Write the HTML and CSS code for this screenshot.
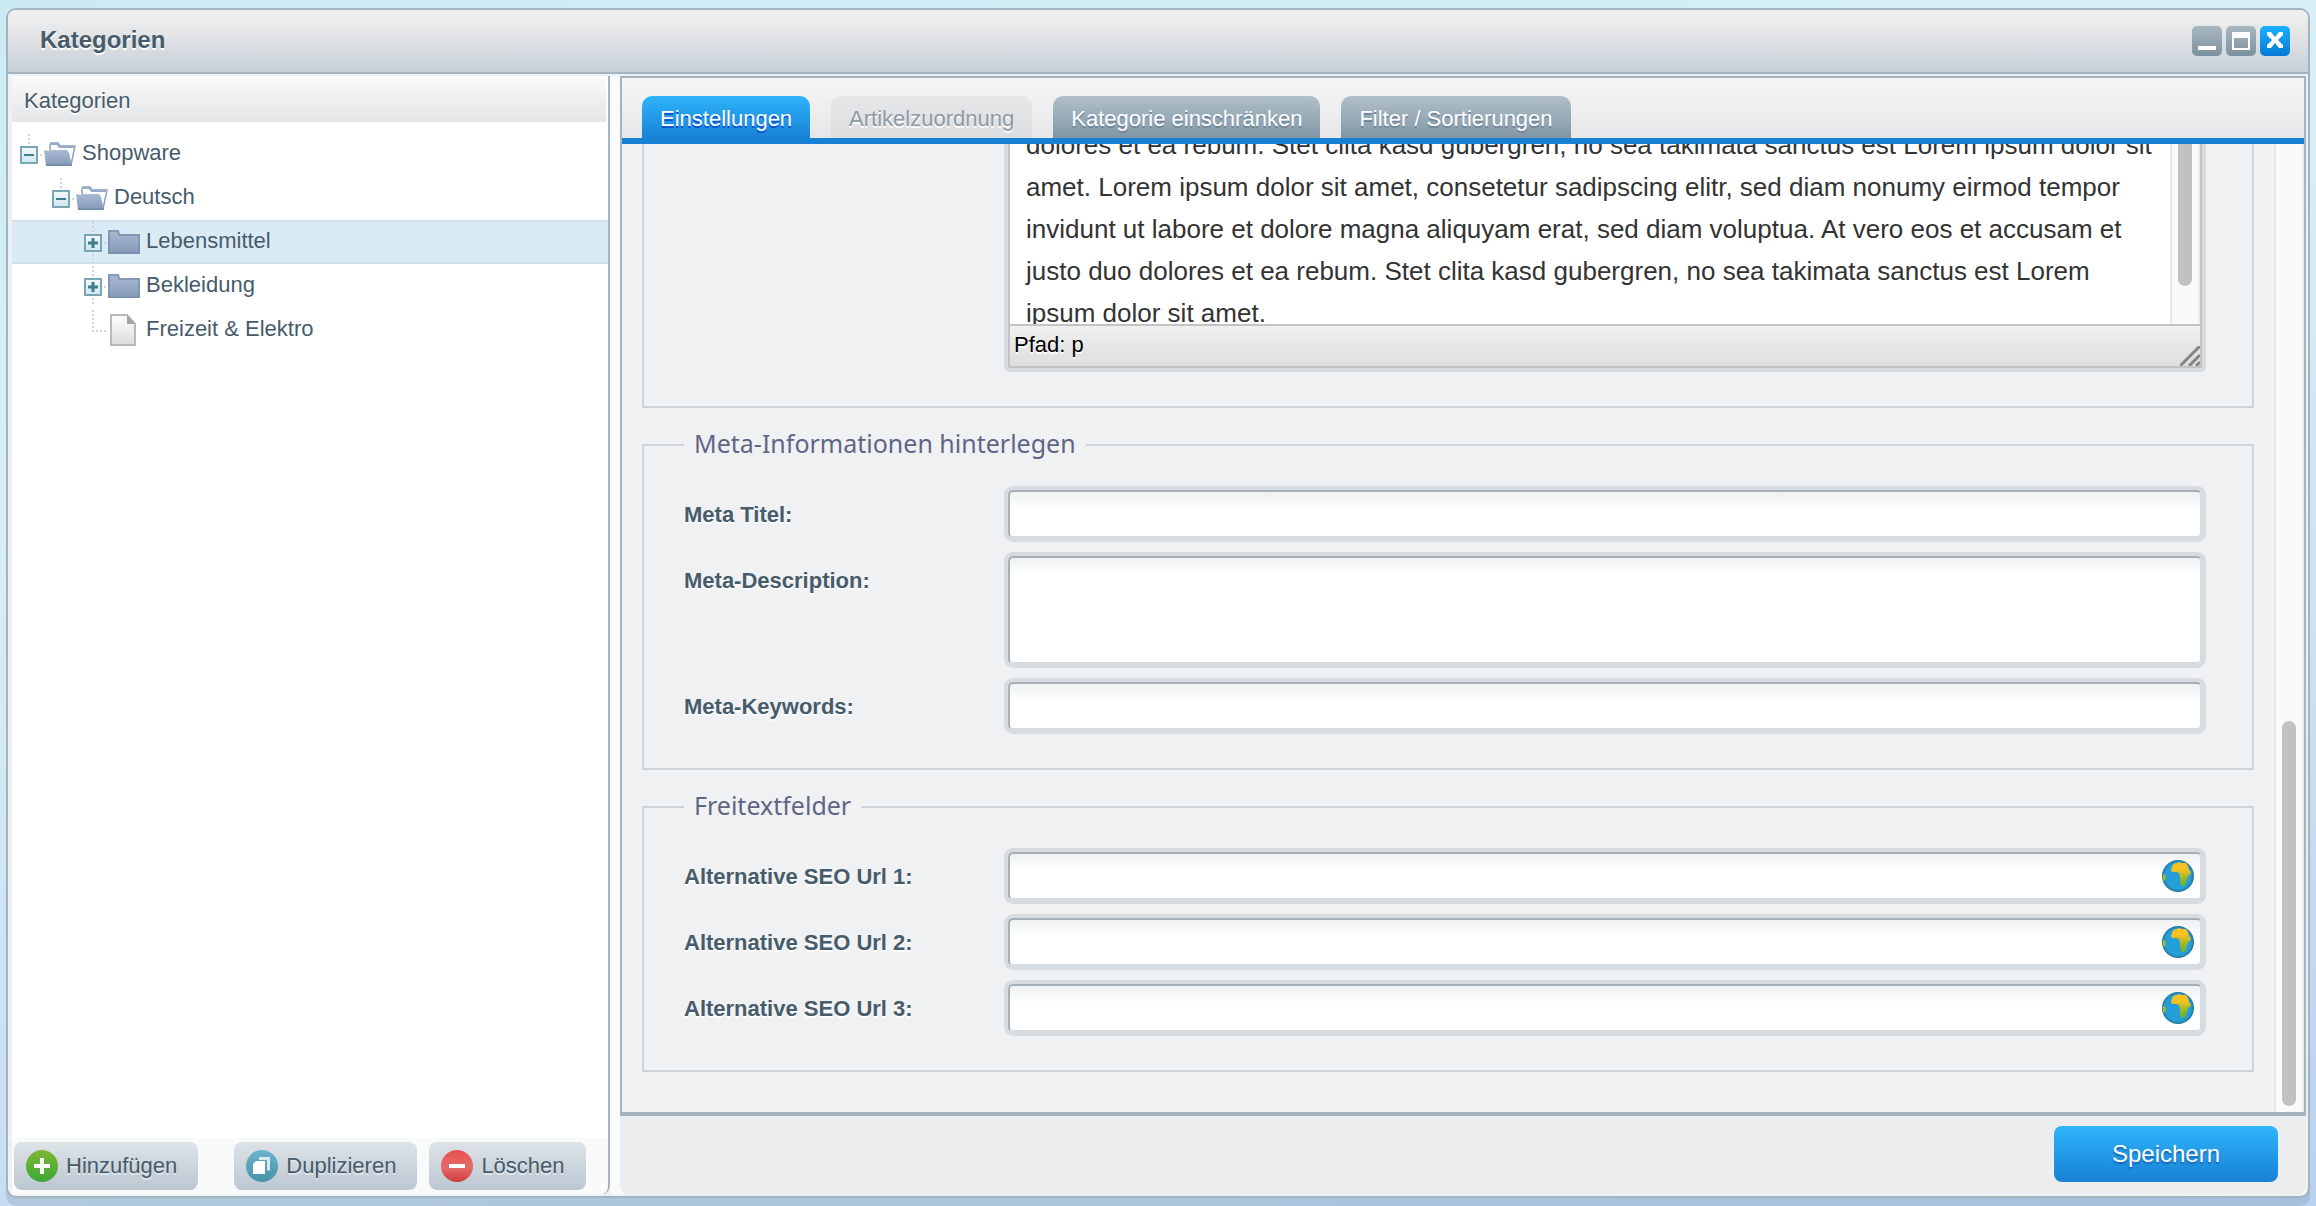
FILE: index.html
```html
<!DOCTYPE html>
<html lang="de">
<head>
<meta charset="utf-8">
<title>Kategorien</title>
<link rel="stylesheet" href="styles.css">
</head>
<body>
<svg class="defs" aria-hidden="true">
  <defs>
    <linearGradient id="g-folder" x1="0" y1="0" x2="0" y2="1"><stop offset="0" stop-color="#a9bad2"/><stop offset="1" stop-color="#859ab8"/></linearGradient>
    <linearGradient id="g-exp" x1="0" y1="0" x2="0" y2="1"><stop offset="0" stop-color="#f2fafb"/><stop offset="1" stop-color="#cfe6ee"/></linearGradient>
    <linearGradient id="g-page" x1="0" y1="0" x2="0" y2="1"><stop offset="0" stop-color="#fdfdfd"/><stop offset="1" stop-color="#dcdcdc"/></linearGradient>
    <linearGradient id="g-green" x1="0" y1="0" x2="0" y2="1"><stop offset="0" stop-color="#7fb734"/><stop offset="1" stop-color="#3aa838"/></linearGradient>
    <linearGradient id="g-teal" x1="0" y1="0" x2="0" y2="1"><stop offset="0" stop-color="#6db3cc"/><stop offset="1" stop-color="#4494a8"/></linearGradient>
    <linearGradient id="g-red" x1="0" y1="0" x2="0" y2="1"><stop offset="0" stop-color="#e84f50"/><stop offset=".55" stop-color="#e76a6a"/><stop offset="1" stop-color="#cf3b3a"/></linearGradient>
    <linearGradient id="g-land" gradientUnits="userSpaceOnUse" x1="0" y1="9" x2="0" y2="22"><stop offset="0" stop-color="#f6c121"/><stop offset="1" stop-color="#7ab32b"/></linearGradient>
    <radialGradient id="g-sea"><stop offset=".8" stop-color="#259fd9"/><stop offset="1" stop-color="#22749b"/></radialGradient>
  </defs>
  <symbol id="i-minus" viewBox="0 0 18 18"><rect x="1" y="1" width="16" height="16" fill="url(#g-exp)" stroke="#7aa6b4" stroke-width="2"/><path d="M4 9h10" stroke="#3f7d8f" stroke-width="2"/></symbol>
  <symbol id="i-plus" viewBox="0 0 18 18"><rect x="1" y="1" width="16" height="16" fill="url(#g-exp)" stroke="#7aa6b4" stroke-width="2"/><path d="M4 9h10M9 4v10" stroke="#3f7d8f" stroke-width="3"/></symbol>
  <symbol id="i-folder" viewBox="0 0 32 24"><path d="M0 0h11l1 4h20v20H0z" fill="url(#g-folder)"/><path d="M1 23V1h9l1 4h20v18z" fill="none" stroke="#7890ae" stroke-width="1.5"/></symbol>
  <symbol id="i-open" viewBox="0 0 32 24"><path d="M6 8V3l1-2h7l2 3h15l-4 19h-4z" fill="#fdfdff" stroke="#8da0bc" stroke-width="1.5"/><path d="M6 1h8l2 3h15v2H15l-2-3H6z" fill="#97abc6"/><path d="M0 8l6 1 3-1h14l2 3 3 13H2z" fill="url(#g-folder)"/><path d="M2 23h26" stroke="#7088a8" stroke-width="1.5"/></symbol>
  <symbol id="i-page" viewBox="0 0 26 32"><path d="M1 1h16l8 9v21H1z" fill="url(#g-page)" stroke="#b9b9b9" stroke-width="2"/><path d="M17 1v9h8z" fill="#a3a3a3"/></symbol>
  <symbol id="i-globe" viewBox="0 0 32 32"><circle cx="16" cy="16" r="16" fill="url(#g-sea)"/><path d="M10 7q1-4 5-4l2-1 3 1 4 0 2 3 1 4 2 2-1 3-2 1-1 4-2 5q-2 2-4 0l-1-3 0-5-1-4-3-1-4 0-1-2zM1 14l2 1 1 3-1 2-2 1z" fill="url(#g-land)"/></symbol>
</svg>

<div class="window">
  <header class="titlebar">
    <h1>Kategorien</h1>
    <div class="tools">
      <button type="button" class="tool" aria-label="Minimieren"><svg viewBox="0 0 30 30"><path d="M6 20h18v4H6z" fill="#fff"/></svg></button>
      <button type="button" class="tool" aria-label="Maximieren"><svg viewBox="0 0 30 30"><path d="M6 6h18v18H6z M8 12v10h14v-10z" fill="#fff" fill-rule="evenodd"/></svg></button>
      <button type="button" class="tool tool-close" aria-label="Schließen"><svg viewBox="0 0 30 30"><path d="M7 6h4l4 5 4-5h4v3l-5 5 5 5v3h-4l-4-5-4 5H7v-3l5-5-5-5z" fill="#fff"/></svg></button>
    </div>
  </header>

  <div class="content">
    <aside class="sidebar">
      <h2>Kategorien</h2>
      <ul class="tree">
        <li class="node level-0"><span class="elbow top"><svg class="exp"><use href="#i-minus"/></svg></span><svg class="folder"><use href="#i-open"/></svg><span>Shopware</span></li>
        <li class="node level-1"><span class="elbow top"><svg class="exp"><use href="#i-minus"/></svg></span><svg class="folder"><use href="#i-open"/></svg><span>Deutsch</span></li>
        <li class="node level-2 selected"><span class="elbow through"><svg class="exp"><use href="#i-plus"/></svg></span><svg class="folder"><use href="#i-folder"/></svg><span>Lebensmittel</span></li>
        <li class="node level-2"><span class="elbow through"><svg class="exp"><use href="#i-plus"/></svg></span><svg class="folder"><use href="#i-folder"/></svg><span>Bekleidung</span></li>
        <li class="node level-2"><span class="elbow end"></span><span class="leaf"><svg class="page"><use href="#i-page"/></svg></span><span>Freizeit &amp; Elektro</span></li>
      </ul>
      <div class="actions">
        <button type="button" class="action action-add"><svg viewBox="0 0 32 32"><circle cx="16" cy="16" r="16" fill="url(#g-green)"/><path d="M8 16h16M16 8v16" stroke="#fff" stroke-width="4"/></svg>Hinzufügen</button>
        <button type="button" class="action"><svg viewBox="0 0 32 32"><circle cx="16" cy="16" r="16" fill="url(#g-teal)"/><path d="M13 8.500h9.500v12" fill="none" stroke="#d5e9ee" stroke-width="3"/><path d="M7 14l3-3h9v13H7z" fill="#fff"/></svg>Duplizieren</button>
        <button type="button" class="action"><svg viewBox="0 0 32 32"><circle cx="16" cy="16" r="16" fill="url(#g-red)"/><path d="M8 16h16" stroke="#fff" stroke-width="4"/></svg>Löschen</button>
      </div>
    </aside>

    <main class="main">
      <section class="panel">
        <nav class="tabs">
          <button type="button" class="tab active">Einstellungen</button>
          <button type="button" class="tab" disabled>Artikelzuordnung</button>
          <button type="button" class="tab">Kategorie einschränken</button>
          <button type="button" class="tab">Filter / Sortierungen</button>
        </nav>
        <div class="viewport">
          <form class="form" id="settings">
            <fieldset>
              <div class="row">
                <div class="editor">
                  <div class="document">
                    <p>dolores et ea rebum. Stet clita kasd gubergren, no sea takimata sanctus est Lorem ipsum dolor sit amet. Lorem ipsum dolor sit amet, consetetur sadipscing elitr, sed diam nonumy eirmod tempor invidunt ut labore et dolore magna aliquyam erat, sed diam voluptua. At vero eos et accusam et justo duo dolores et ea rebum. Stet clita kasd gubergren, no sea takimata sanctus est Lorem ipsum dolor sit amet.</p>
                    <div class="track"><div class="thumb"></div></div>
                  </div>
                  <div class="status"><span>Pfad: p</span><svg viewBox="0 0 20 20"><path d="M0 20L20 0M9 20L20 9M16 20l4-4" stroke="#858585" stroke-width="3"/></svg></div>
                </div>
              </div>
            </fieldset>
            <fieldset>
              <legend>Meta-Informationen hinterlegen</legend>
              <div class="row"><label for="title">Meta Titel:</label><input class="field" id="title" type="text"></div>
              <div class="row"><label for="desc">Meta-Description:</label><textarea class="field" id="desc"></textarea></div>
              <div class="row"><label for="keys">Meta-Keywords:</label><input class="field" id="keys" type="text"></div>
            </fieldset>
            <fieldset>
              <legend>Freitextfelder</legend>
              <div class="row"><label for="seo1">Alternative SEO Url 1:</label><div class="with-icon"><input class="field" id="seo1" type="text"><svg class="globe"><use href="#i-globe"/></svg></div></div>
              <div class="row"><label for="seo2">Alternative SEO Url 2:</label><div class="with-icon"><input class="field" id="seo2" type="text"><svg class="globe"><use href="#i-globe"/></svg></div></div>
              <div class="row"><label for="seo3">Alternative SEO Url 3:</label><div class="with-icon"><input class="field" id="seo3" type="text"><svg class="globe"><use href="#i-globe"/></svg></div></div>
            </fieldset>
          </form>
          <div class="track page-track"><div class="thumb"></div></div>
        </div>
      </section>
      <footer class="footer"><button type="submit" form="settings" class="save">Speichern</button></footer>
    </main>
  </div>
</div>
</body>
</html>
```
FILE: styles.css
```css
* { box-sizing: border-box; }

body {
  margin: 0;
  height: 100vh;
  padding: 8px 6px;
  overflow: hidden;
  background: linear-gradient(170deg, #cbebf4 0%, #d8f0f5 30%, #cfe3f3 60%, #b8d2ef 100%);
  font: 22px/28px "Liberation Sans", Arial, sans-serif;
  color: #475c6a;
}

h1, h2, p, ul { margin: 0; padding: 0; }
button { font: inherit; border: 0; padding: 0; }
svg { display: block; flex: none; }
.defs { position: absolute; width: 0; height: 0; }

.window {
  display: flex;
  flex-direction: column;
  height: 100%;
  border: 2px solid #a3b3bf;
  border-radius: 10px;
  background: #eef1f4;
  overflow: hidden;
  box-shadow: 0 8px 0 #6e8ca040;
}

.titlebar {
  display: flex;
  justify-content: space-between;
  height: 64px;
  flex: none;
  padding: 16px 18px 0 32px;
  border-bottom: 2px solid #a3b3bf;
  background: linear-gradient(#f0f0f0, #dfe2e4 50%, #c8d0da 95%);
}
.titlebar h1 { font-size: 24px; line-height: 28px; text-shadow: 0 2px 0 #fff; }

.tools { display: flex; gap: 4px; }
.tool {
  width: 30px;
  height: 30px;
  border-radius: 5px;
  background: linear-gradient(#a8b8c2, #7b909e);
}
.tool-close { background: linear-gradient(#1ab0fb, #067bd8); }

.content { flex: 1; display: flex; min-height: 0; padding: 2px 2px 2px 4px; }

.sidebar {
  display: flex;
  flex-direction: column;
  width: 598px;
  flex: none;
  border-right: 2px solid #a3b3bf;
  border-radius: 0 0 8px 0;
  background: #f9fbfa;
}
.sidebar h2 {
  height: 48px;
  padding: 10px 12px;
  border: 2px solid #fff;
  border-left: 0;
  background: linear-gradient(#f9f9f9, #e4e5e7);
  font-size: 22px;
  line-height: 26px;
  font-weight: 400;
  text-shadow: 0 2px 0 #fff;
}
.tree {
  flex: 1;
  padding-top: 8px;
  background: #fff;
  list-style: none;
}
.node {
  display: flex;
  align-items: center;
  height: 44px;
  border: solid transparent;
  border-width: 2px 0;
}
.node > span:last-child { padding: 0 0 2px 6px; }
.level-1 { padding-left: 32px; }
.level-2 { padding-left: 64px; }
.selected { background: #dbebf6; border-color: #d0dfec; }

/* Dotted connector lines of the tree */
.elbow {
  display: flex;
  align-items: center;
  justify-content: center;
  width: 32px;
  height: 40px;
  padding: 2px 0 0 2px;
}
.elbow.top {
  background:
    linear-gradient(#d4d4d4, #d4d4d4) 28px 20px / 2px 2px no-repeat,
    repeating-linear-gradient(#d4d4d4 0 2px, transparent 2px 4px) 16px 0 / 2px 12px no-repeat;
}
.elbow.through {
  background:
    linear-gradient(#d4d4d4, #d4d4d4) 28px 20px / 2px 2px no-repeat,
    repeating-linear-gradient(#d4d4d4 0 2px, transparent 2px 4px) 16px 0 / 2px 40px no-repeat;
}
.elbow.end {
  background:
    repeating-linear-gradient(#d4d4d4 0 2px, transparent 2px 4px) 16px 0 / 2px 22px no-repeat,
    repeating-linear-gradient(90deg, #d4d4d4 0 2px, transparent 2px 4px) 16px 20px / 14px 2px no-repeat;
}
.exp { width: 18px; height: 18px; }
.folder { width: 32px; height: 24px; }
.leaf { width: 32px; }
.page { width: 26px; height: 32px; margin-left: 2px; }

.actions { display: flex; gap: 12px; padding: 4px 2px; }
.action {
  display: flex;
  align-items: center;
  gap: 8px;
  height: 48px;
  padding: 0 21px 0 12px;
  border-radius: 8px;
  background: linear-gradient(#dde3e7, #bcc7d2);
  color: #475c6a;
  text-shadow: 0 2px 0 #dfe5ea;
}
.action svg { width: 32px; height: 32px; }
.action-add { margin-right: 24px; }

.main {
  flex: 1;
  display: flex;
  flex-direction: column;
  min-width: 0;
  padding-left: 10px;
  background: #f9fbfa;
}
.panel {
  flex: 1;
  display: flex;
  flex-direction: column;
  min-height: 0;
  border: 2px solid #a3b3bf;
  border-bottom-width: 4px;
}
.tabs {
  display: flex;
  align-items: flex-end;
  gap: 21px;
  height: 66px;
  flex: none;
  padding-left: 20px;
  border-bottom: 6px solid #1781d6;
  background: linear-gradient(#f6f6f6, #e5e6e9);
}
.tab {
  height: 42px;
  padding: 3px 18px 0;
  border-radius: 10px 10px 0 0;
  background: linear-gradient(#b1c0ca, #8096a5);
  color: #fff;
  text-shadow: 0 2px 0 #71879a;
}
.tab.active { background: linear-gradient(#2fb4fa, #1781d6); text-shadow: 0 2px 0 #0a50d2; }
.tab:disabled { background: linear-gradient(#e6e7e9, #dddee0); color: #8c9ba6; text-shadow: 0 2px 0 #fff; }

.viewport { flex: 1; display: flex; min-height: 0; background: #f0f1f3; }
.form {
  flex: 1;
  display: flex;
  flex-direction: column;
  justify-content: flex-end;
  gap: 22px;
  min-width: 0;
  padding: 0 20px 40px;
  overflow: hidden;
}
fieldset {
  flex: none;
  min-width: 0;
  margin: 0;
  padding: 26px 46px 34px 40px;
  border: 2px solid #cdd5da;
}
legend {
  margin: 0;
  padding: 0 10px 4px;
  color: #5f6685;
  font: 25px/26px "Noto Sans", sans-serif;
}
.row { display: flex; justify-content: flex-end; }
.row + .row { margin-top: 10px; }
.row label {
  flex: 1;
  padding-top: 1px;
  font-weight: 700;
  line-height: 55px;
  text-shadow: 0 2px 0 #fff;
}

.field, .editor { width: 1194px; flex: 0 1 auto; margin: 4px; box-shadow: 0 0 0 4px #d7dce0; }
.field {
  display: block;
  height: 48px;
  padding: 0 12px;
  border: solid #d7dce0;
  border-width: 2px;
  border-top-color: #a5b0b7;
  border-left-color: #a5b0b7;
  border-radius: 5px;
  outline: 0;
  background: linear-gradient(#eef1f1, #fff 16px);
  font: inherit;
  color: inherit;
}
textarea.field { height: 108px; resize: none; }
.with-icon { position: relative; }
.globe { position: absolute; right: 12px; top: 12px; width: 32px; height: 32px; }

.editor { border: 2px solid #c3c3c3; border-radius: 2px; background: #fff; color: #333; }
.document { display: flex; height: 202px; overflow: hidden; border-bottom: 2px solid #c3c3c3; }
.document p { flex: 1; padding: 0 16px; font-size: 26px; line-height: 42px; }
.status {
  display: flex;
  justify-content: space-between;
  height: 40px;
  padding-left: 4px;
  background: linear-gradient(#f0f0f0, #dedede);
  color: #000;
  line-height: 38px;
  text-shadow: 0 2px 0 #fff;
}
.status svg { align-self: flex-end; width: 20px; height: 20px; }

.track {
  display: flex;
  width: 30px;
  flex: none;
  padding: 0 6px;
  border-left: 2px solid #e8e8e8;
  border-right: 2px solid #ededed;
  background: #fafafa;
}
.thumb { width: 16px; height: 162px; border-radius: 8px; background: #c1c1c1; }
.page-track { align-items: flex-end; padding-bottom: 6px; }
.page-track .thumb { height: 40%; }

.footer {
  display: flex;
  justify-content: flex-end;
  flex: none;
  height: 78px;
  padding: 10px 28px 0;
  border-radius: 0 0 8px 8px;
  background: #ebedef;
}
.save {
  width: 224px;
  height: 56px;
  border-radius: 8px;
  background: linear-gradient(#2fb4fa, #1781d6);
  color: #fff;
  font-size: 24px;
  text-shadow: 0 2px 2px #1560a8;
}
```
